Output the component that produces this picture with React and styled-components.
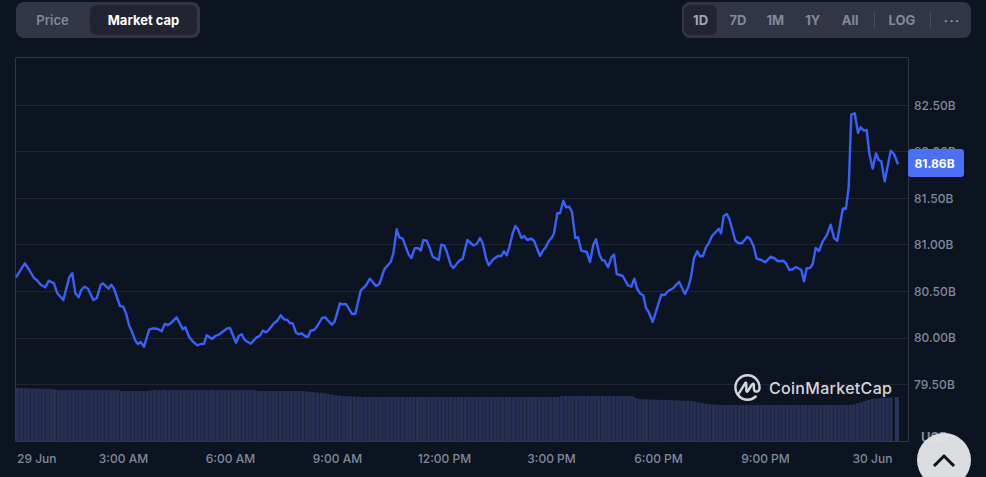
import React from 'react';
import styled, { createGlobalStyle } from 'styled-components';
import { SiCoinmarketcap } from 'react-icons/si';

const GlobalStyle = createGlobalStyle`
  html, body {
    margin: 0;
    padding: 0;
    background: #0d1421;
  }
`;

const Page = styled.div`
  position: relative;
  width: 986px;
  height: 477px;
  overflow: hidden;
  padding: 2px 15px 0;
  box-sizing: border-box;
  background: #0d1421;
  font-family: Inter, "Liberation Sans", sans-serif;
`;

const Header = styled.div`
  display: flex;
  justify-content: space-between;
  margin-left: 1px;
  margin-bottom: 19px;
`;

const Segment = styled.div`
  display: flex;
  align-items: center;
  gap: 3px;
  height: 36px;
  padding: 0 3px 0 2px;
  box-sizing: border-box;
  background: #323546;
  border-radius: 8px;
`;

const RangeGroup = styled(Segment)`
  gap: 0;
  padding-right: 0;
`;

const Tab = styled.div`
  display: flex;
  align-items: center;
  justify-content: center;
  width: ${(p) => p.$width}px;
  height: 30px;
  border-radius: 6px;
  font-size: 13px;
  font-weight: ${(p) => (p.$active ? 700 : 600)};
  color: ${(p) => (p.$active ? '#fff' : '#808a9d')};
  background: ${(p) => (p.$active ? '#222531' : 'transparent')};
`;

const RangeButton = styled.div`
  display: flex;
  align-items: center;
  justify-content: center;
  width: 33px;
  height: 30px;
  margin-right: 4.4px;
  border-radius: 6px;
  font-size: 13px;
  font-weight: 700;
  color: ${(p) => (p.$active ? '#a1a7bb' : '#808a9d')};
  background: ${(p) => (p.$active ? '#222531' : 'transparent')};
`;

const Divider = styled.div`
  width: 1px;
  height: 18px;
  background: #4a4d60;
`;

const FirstDivider = styled(Divider)`
  margin-left: 2.5px;
`;

const LogButton = styled(RangeButton)`
  width: 55px;
  margin: 0;
`;

const MoreButton = styled(RangeButton)`
  width: 40.5px;
  margin: 0;
  padding-left: 2.5px;
  box-sizing: border-box;
  font-size: 14px;
  letter-spacing: 1px;
`;

const ChartRow = styled.div`
  position: relative;
  display: flex;
`;

const Plot = styled.svg`
  display: block;
  flex: none;
  width: 894px;
  height: 385px;
`;

const YAxis = styled.div`
  display: flex;
  flex-direction: column;
  height: 385px;
  padding: 25.6px 0 0 5px;
  box-sizing: border-box;
`;

const YLabel = styled.div`
  flex: none;
  height: 46.55px;
  line-height: 46.55px;
  font-size: 12px;
  font-weight: 500;
  letter-spacing: 0.05px;
  color: #808a9d;
  white-space: nowrap;
`;

const Unit = styled(YLabel)`
  margin-top: 6px;
  padding-left: 7px;
  font-size: 13px;
  font-weight: 700;
`;

const PriceTag = styled.div`
  position: absolute;
  left: 893px;
  top: 92px;
  width: 56px;
  height: 28px;
  padding-right: 3px;
  box-sizing: border-box;
  display: flex;
  align-items: center;
  justify-content: center;
  border-radius: 3px;
  background: #4b70f5;
  color: #fff;
  font-size: 12px;
  font-weight: 700;
`;

const Watermark = styled.div`
  position: absolute;
  left: 719px;
  top: 317px;
  display: flex;
  align-items: center;
  gap: 8px;
  color: #d5d7dc;
  font-size: 16px;
  font-weight: 500;
  letter-spacing: 0.3px;
`;

const XAxis = styled.div`
  display: grid;
  grid-template-columns: 55px repeat(8, 107px);
  height: 32px;
  align-items: center;
`;

const XLabel = styled.div`
  font-size: 12px;
  font-weight: 500;
  color: #808a9d;
  text-align: center;
  white-space: nowrap;
`;

const FirstXLabel = styled(XLabel)`
  text-align: left;
  padding-left: 2px;
`;

const ScrollTop = styled.div`
  position: absolute;
  left: 917px;
  top: 433px;
  width: 54px;
  height: 54px;
  border-radius: 50%;
  display: flex;
  justify-content: center;
  padding-top: 20px;
  box-sizing: border-box;
  background: rgba(228, 229, 231, 0.96);
`;

// traced pieces of the line: [offsetX, offsetY, x, y, x, y ...] at 3x
const traced = [
  [0, 240, [48,112,74,70,88,90,102,114,110,120,122,134,136,142,146,122,162,130,172,160,190,180,208,112,217,100,226,160,236,172,244,150,254,140,264,146,280,180,290,175,302,135,308,130,326,146,334,134,342,146,360,198,370,200,378,220,388,258,396,275,406,302,414,312,422,306,432,320,448,268,460,265,475,268,485,274,494,252,504,255,514,248,530,232,548,268,556,262,568,292,578,304,592,316,602,312,612,311,620,286,636,297,646,288,656,284,680,266,690,264,708,308,716,288,725,283,734,300,752,311,770,292,780,287,788,272,798,277,808,268,822,250,832,242,842,226,852,238,862,240,870,250,878,250,888,278,896,283,904,280,918,290,924,290,932,272,942,270,952,258,966,234,976,232,988,246]],
  [330, 190, [0,398,6,404,14,394,30,340,36,343,48,342,66,372,76,371,92,302,108,286,120,266,138,288,148,282,164,236,182,216,190,190,200,118,208,142,218,146,236,194,244,204,254,175,264,174,272,182,280,150,290,152,298,170,308,200,326,210,334,164,342,166,350,184,362,224,370,234,388,212,398,206,412,150,430,166,440,162,450,144,458,160,468,204,476,226,490,208,504,198,514,198,522,184,530,196,538,172,548,130,556,108,564,118,574,144,582,138,592,150,604,146,612,152,630,198,640,180,646,174,656,154,666,142,672,130,682,70,690,70,700,32,708,52,718,50,726,66,736,144,744,142,754,182,770,186,780,216,790,164,798,148,808,192,816,210,824,212,834,232,844,202,852,194,860,252,878,258,894,286,904,290,913,266,922,298,932,312,940,316,948,354,956,366,968,396]],
  [620, 190, [124,314,134,315,144,304,160,294,177,275,195,312,205,292,213,262,222,205,232,184,240,199,249,198,258,172,266,160,276,138,296,116,303,130,311,78,320,72,328,86,346,152,356,160,366,160,382,140,390,146,400,166,410,206,424,210,436,217,452,200,462,204,474,214,490,212,498,220,508,240,518,238,528,231,544,240,552,274,560,235,570,234,578,222,587,174,597,183,608,154,620,136,632,104,642,144,652,152,668,58,677,56]],
  [780, 100, [188,326,198,324,206,262,214,44,224,40,234,98,242,82,252,92,260,90,268,160,278,206,288,160,296,180,304,184,314,244,332,152,342,162,354,193]],
];

const linePoints = traced
  .flatMap(([ox, oy, pts]) =>
    pts.reduce((acc, v, i) => {
      if (i % 2 === 0) acc.push(`${(ox + v / 3).toFixed(1)},${(oy + pts[i + 1] / 3).toFixed(1)}`);
      return acc;
    }, [])
  )
  .join(' ');

// top edge of the volume bars, [x, y]
const volumeTops = [
  [16,388],[52,389],[54,390],[118,390],[120,391],[148,391],[150,390],[255,390],[257,391],[300,391],
  [320,393],[340,396],[360,397],[558,397],[560,396],[630,396],[636,399],[690,401],[705,404],[720,405],
  [850,405],[860,402],[870,399],[882,398],[899,397],
];

const volumeTop = (x) => {
  for (let i = 1; i < volumeTops.length; i++) {
    const [x0, y0] = volumeTops[i - 1];
    const [x1, y1] = volumeTops[i];
    if (x <= x1) return y0 + ((y1 - y0) * (x - x0)) / (x1 - x0);
  }
  return 397;
};

const volumeBars = [];
for (let x = 16; x < 892; x += 3.7) volumeBars.push(x);

const gridLines = [105, 151, 198, 244, 291, 338, 384];
const yLabels = ['82.50B', '82.00B', '81.50B', '81.00B', '80.50B', '80.00B', '79.50B'];
const xLabels = ['3:00 AM', '6:00 AM', '9:00 AM', '12:00 PM', '3:00 PM', '6:00 PM', '9:00 PM', '30 Jun'];
const ranges = ['1D', '7D', '1M', '1Y', 'All'];

const App = () => (
  <Page>
    <GlobalStyle />
    <Header>
      <Segment>
        <Tab $width={69}>Price</Tab>
        <Tab $width={107} $active>Market cap</Tab>
      </Segment>
      <RangeGroup>
        {ranges.map((r, i) => (
          <RangeButton key={r} $active={i === 0}>{r}</RangeButton>
        ))}
        <FirstDivider />
        <LogButton>LOG</LogButton>
        <Divider />
        <MoreButton>···</MoreButton>
      </RangeGroup>
    </Header>

    <ChartRow>
      <Plot viewBox="15 57 894 385">
        {gridLines.map((y) => (
          <line key={y} x1="15" x2="908" y1={y + 0.5} y2={y + 0.5} stroke="#222531" />
        ))}
        {volumeBars.map((x) => {
          const top = volumeTop(x);
          return <rect key={x} x={x} y={top} width="3.45" height={441 - top} fill="#273053" />;
        })}
        <rect x="895" y="397" width="4" height="44" fill="#2b355c" />
        <path d="M15.5 442 V57.5 H908.5 V442 M15 441.5 H909" fill="none" stroke="#323546" />
        <polyline points={linePoints} fill="none" stroke="#3861fb" strokeWidth="2.4" strokeLinejoin="round" />
      </Plot>
      <YAxis>
        {yLabels.map((l) => (
          <YLabel key={l}>{l}</YLabel>
        ))}
        <Unit>USD</Unit>
      </YAxis>
      <PriceTag>81.86B</PriceTag>
      <Watermark>
        <SiCoinmarketcap size={27} />
        CoinMarketCap
      </Watermark>
    </ChartRow>

    <XAxis>
      <FirstXLabel>29 Jun</FirstXLabel>
      {xLabels.map((l) => (
        <XLabel key={l}>{l}</XLabel>
      ))}
    </XAxis>

    <ScrollTop>
      <svg width="24" height="16" viewBox="0 0 24 16">
        <polyline points="2,13 12,3 22,13" fill="none" stroke="#0d1421" strokeWidth="3" />
      </svg>
    </ScrollTop>
  </Page>
);

export default App;
